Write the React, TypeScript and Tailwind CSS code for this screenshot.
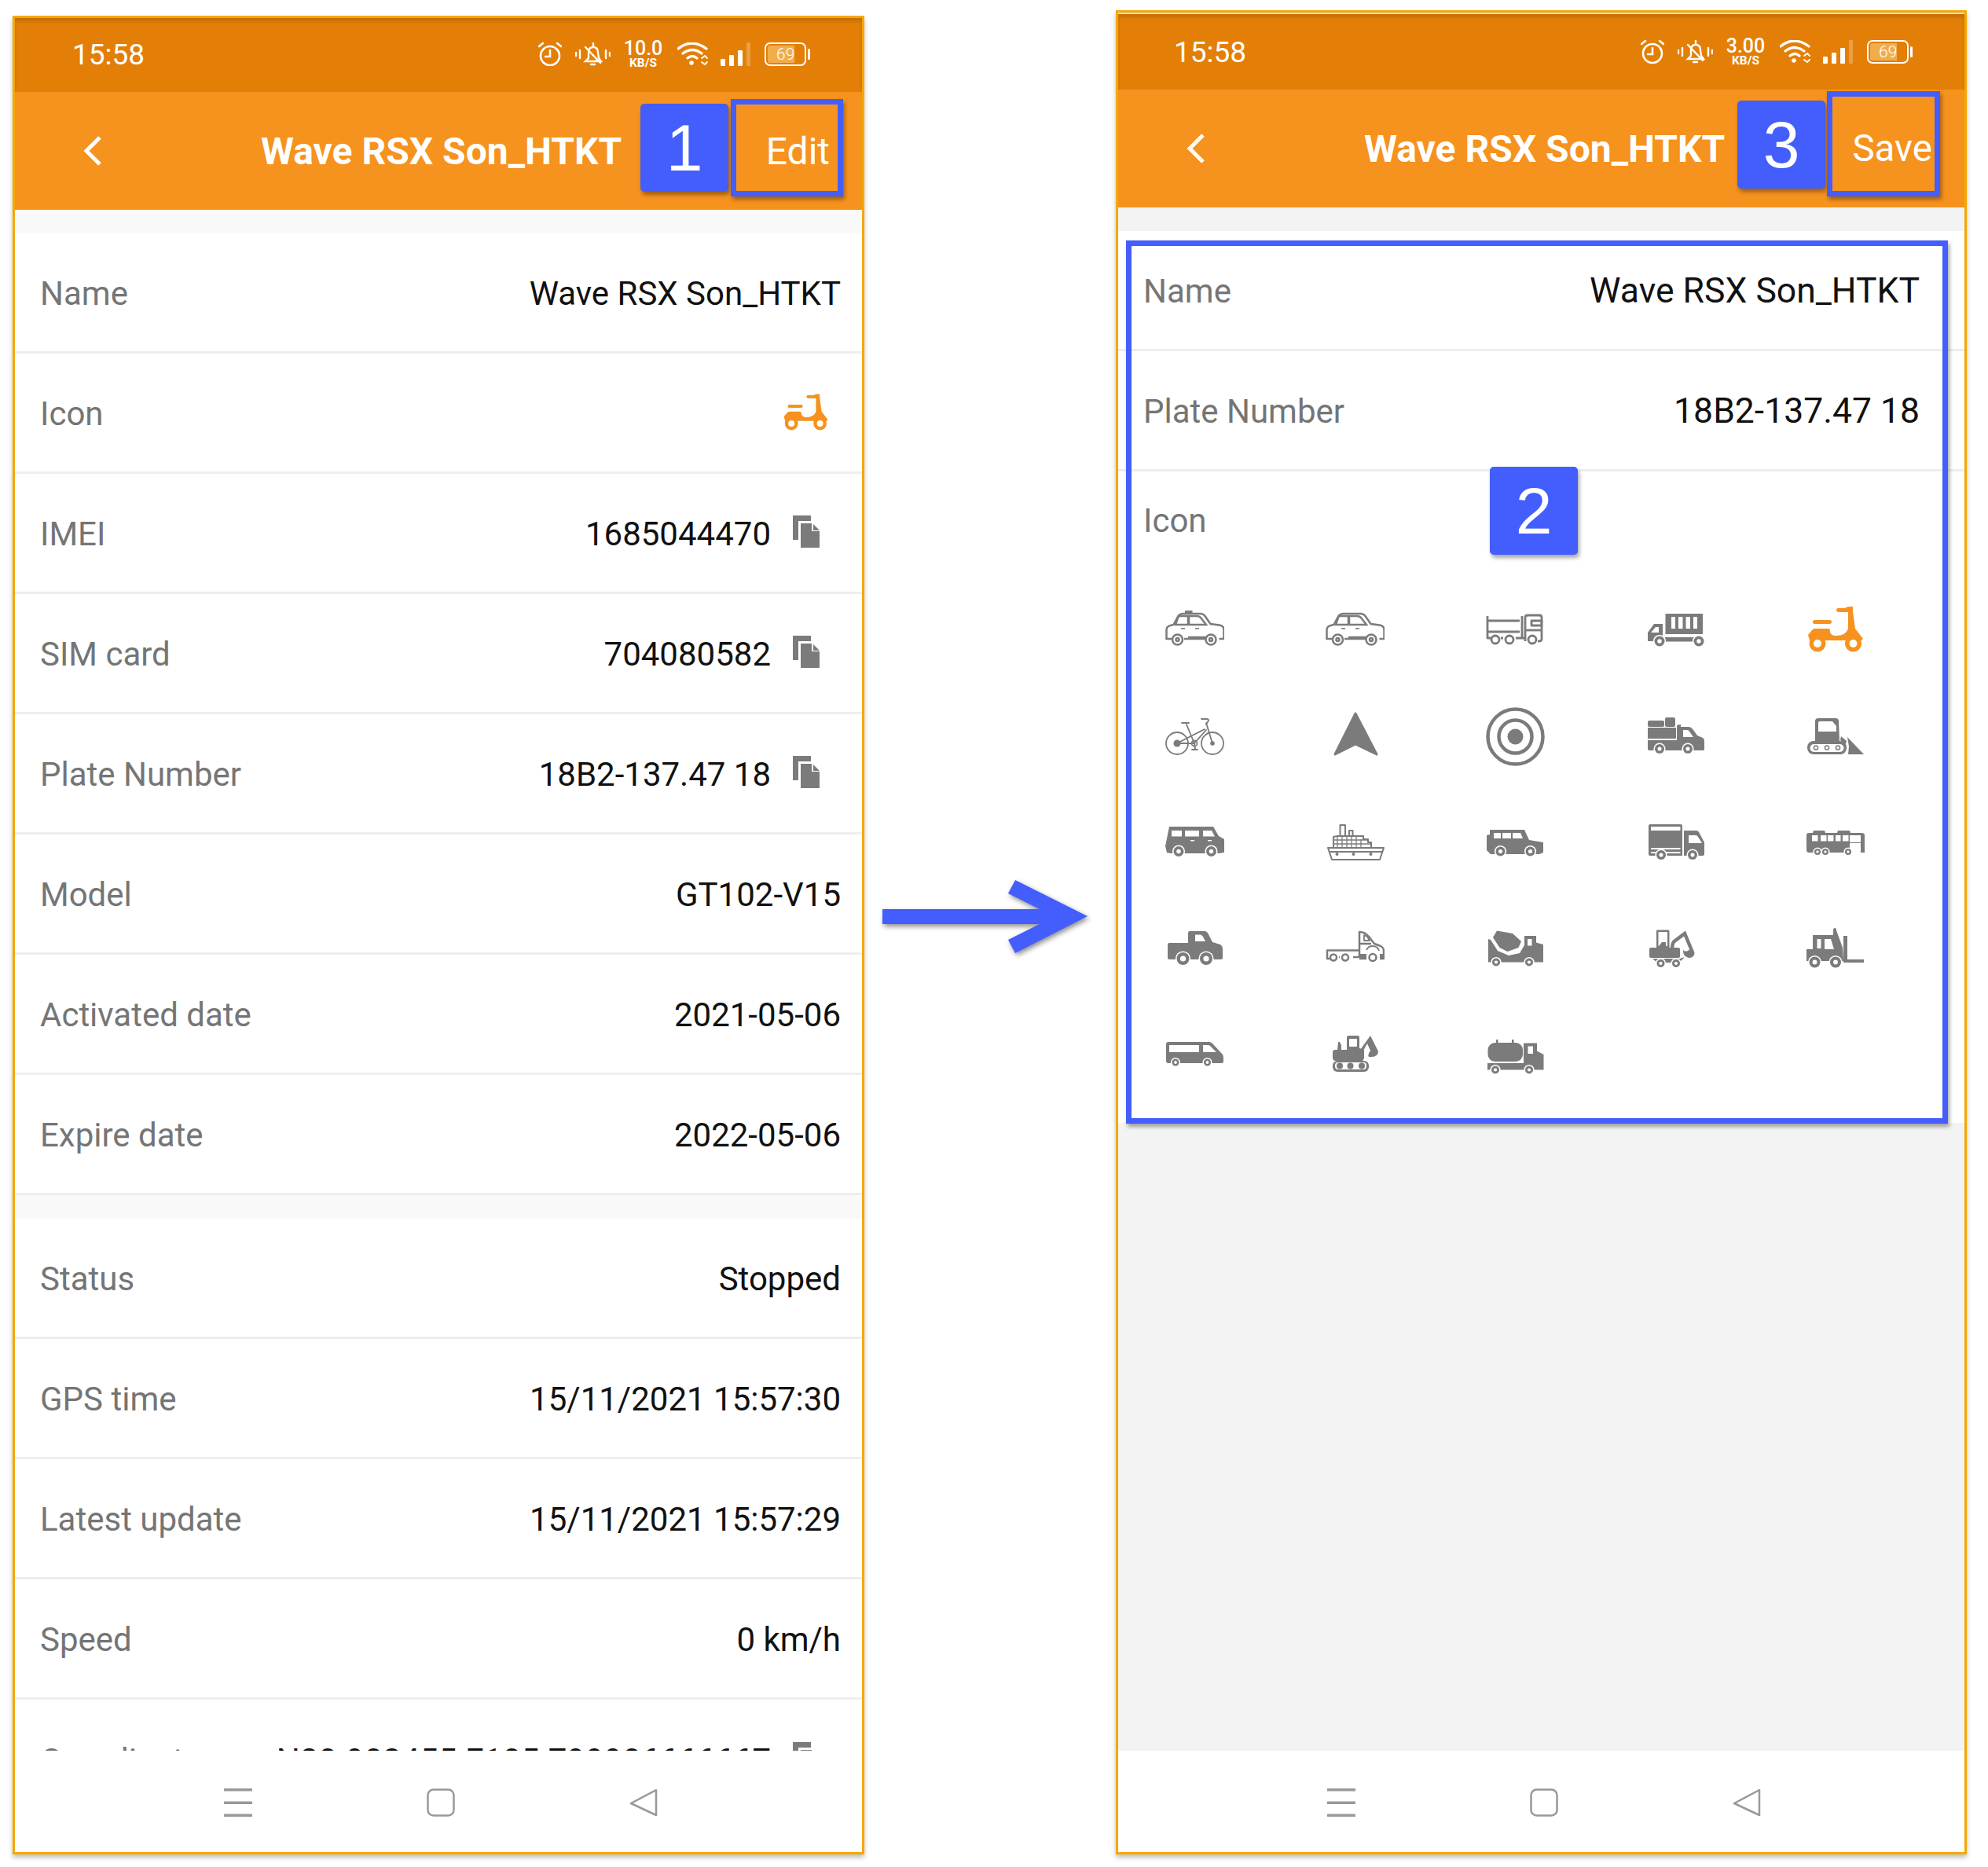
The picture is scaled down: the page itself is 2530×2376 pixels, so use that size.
import type { ReactNode } from 'react'

const G = '#7b7b7b'

function Wheel({ x, y, r, hole = 0.42 }: { x: number; y: number; r: number; hole?: number }) {
  return (
    <g>
      <circle cx={x} cy={y} r={r + 1.6} fill="#fff" />
      <circle cx={x} cy={y} r={r} fill={G} />
      <circle cx={x} cy={y} r={r * hole} fill="#fff" />
    </g>
  )
}

function IconBox({ children, color = G, size = 75 }: { children: ReactNode; color?: string; size?: number }) {
  return (
    <svg width={size} height={size} viewBox="0 0 75 75" fill={color} aria-hidden="true">
      {children}
    </svg>
  )
}

function CarIcon({ taxi = false }: { taxi?: boolean }) {
  return (
    <IconBox>
      {taxi && <rect x="25" y="13" width="9.5" height="4.5" />}
      <g fill="none" stroke={G} strokeWidth="2.5">
        <path d="M8 49H1.5V38q0-5 5-6l4-1 6-11q2-3 6-3h22q4 0 6 3l7 10 11 1.5q6 1 6 6V49h-6M24 49h27" />
        <path d="M13 31l3-9q1-2 3-2h10v11zM30 20h10q3 0 5 2l7 9H30z" />
        <path d="M29 47h23" />
        <circle cx="15.5" cy="50" r="6.5" />
        <circle cx="15.5" cy="50" r="2" />
        <circle cx="58" cy="50" r="6.5" />
        <circle cx="58" cy="50" r="2" />
      </g>
      <rect x="20" y="35" width="5" height="1.6" />
      <rect x="38" y="35" width="5" height="1.6" />
    </IconBox>
  )
}

function DumpTruckIcon() {
  return (
    <IconBox>
      <g fill="none" stroke={G} strokeWidth="2.8" strokeLinejoin="round">
        <path d="M2 20v28h9M19 48h3M38 48h12M2 26h41M2 40h41M46 20v28" />
        <path d="M50 52V22q0-3 3-3h15q3 0 3 3v27q0 3-3 3h-2" />
        <rect x="58" y="26" width="13" height="6" />
        <path d="M50 38h21" />
      </g>
      <circle cx="12" cy="50" r="5" fill="#fff" stroke={G} strokeWidth="2.8" />
      <circle cx="30" cy="50" r="5" fill="#fff" stroke={G} strokeWidth="2.8" />
      <circle cx="59" cy="50" r="5" fill="#fff" stroke={G} strokeWidth="2.8" />
    </IconBox>
  )
}

function ContainerTruckIcon() {
  return (
    <IconBox>
      <path fillRule="evenodd" d="M24.500 17H72V43H24.500zM32 21v15h5V21zM41 21v15h5.500V21zM50.500 21v15H56V21zM60 21v15h5V21z" />
      <path fillRule="evenodd" d="M2 52V41l8-11h11v22zM6 41h10v-7h-4z" />
      <rect x="24" y="47" width="38" height="5.500" />
      <Wheel x={17} y={52} r={6.500} />
      <Wheel x={67} y={52} r={6.500} />
    </IconBox>
  )
}

function ScooterIcon({ size = 75 }: { size?: number }) {
  return (
    <IconBox color="#f6921e" size={size}>
      <rect x="8" y="25" width="24" height="5" rx="2.500" />
      <path d="M38 12q0-2 2-2h9q2-2 6-2h4v7H41q-3 0-3-3z" />
      <path d="M53 14h6l3 22 10 13-2 2H4l-2-7 5-6q1-2 4-2h16q3 0 3 3 0 6 8 6 12 0 15-9z" />
      <circle cx="14" cy="55" r="10.500" />
      <circle cx="59.500" cy="55" r="10.500" />
      <circle cx="14" cy="55" r="5" fill="#fff" />
      <circle cx="59.500" cy="55" r="5" fill="#fff" />
    </IconBox>
  )
}

function BikeIcon() {
  return (
    <IconBox>
      <g fill="none" stroke={G} strokeWidth="1.8" strokeLinecap="round">
        <circle cx="15" cy="46" r="14" />
        <circle cx="60" cy="46" r="14" />
        <path d="M15 46h22L27 22M15 46l35-18M37 46l15-17M52 20l8 26M46 15h7q2 0 2 2l-3 5" />
        <path d="M21 20h9M37 46l1 7M34 54h7" />
        <circle cx="37" cy="46" r="3.500" />
      </g>
      <circle cx="15" cy="46" r="4.500" />
      <circle cx="60" cy="46" r="2.800" />
    </IconBox>
  )
}

function NavArrowIcon() {
  return (
    <IconBox>
      <path d="M38 8L12 60l26-13 27 13z" stroke={G} strokeWidth="3" strokeLinejoin="round" />
    </IconBox>
  )
}

function TargetIcon() {
  return (
    <IconBox>
      <circle cx="37.500" cy="37.500" r="35" fill="none" stroke={G} strokeWidth="4.500" />
      <circle cx="37.500" cy="37.500" r="21" fill="none" stroke={G} strokeWidth="4.500" />
      <circle cx="37.500" cy="37.500" r="10" />
    </IconBox>
  )
}

function LoadedTruckIcon() {
  return (
    <IconBox>
      <rect x="2" y="17" width="21" height="8" rx="2" />
      <rect x="24" y="13" width="13" height="12" rx="2" />
      <rect x="2" y="26" width="36" height="14" />
      <path fillRule="evenodd" d="M2 42h37V24q0-2 5-2v3h10q3 0 6 4l5 7 7 3q2 1 2 5v10q0 1-2 1H4q-2 0-2-2zM47 29v9h13l-5-7q-1-2-3-2z" />
      <Wheel x={17} y={53} r={6} />
      <Wheel x={53} y={53} r={6} />
    </IconBox>
  )
}

function DozerIcon() {
  return (
    <IconBox>
      <path fillRule="evenodd" d="M15 14h22q4 0 4 4l1 25H11V18q0-4 4-4zM17 18q-2 0-2 2v11h23v-7l-5-6z" />
      <rect x="1" y="43" width="50" height="17" rx="8" />
      <rect x="4.500" y="47" width="43" height="10" rx="5" fill="#fff" />
      <circle cx="12" cy="51.500" r="2.600" fill="none" stroke={G} strokeWidth="1.500" />
      <circle cx="26" cy="51.500" r="2.600" fill="none" stroke={G} strokeWidth="1.500" />
      <circle cx="40" cy="51.500" r="2.600" fill="none" stroke={G} strokeWidth="1.500" />
      <path d="M52 38l21 22H53l1-10zM44 37l7 6-1 4-7-5z" />
    </IconBox>
  )
}

function VanIcon() {
  return (
    <IconBox>
      <path fillRule="evenodd" d="M5 17h56l7 12 7 4v17l-7 1H7l-5-1-2-8zM8 22v7.500h13V22zM25 22v7.500h18V22zM48 22v7.500h15l-4-7.500z" />
      <rect x="32" y="34" width="5" height="1.500" fill="#fff" />
      <rect x="54" y="34" width="5" height="1.500" fill="#fff" />
      <Wheel x={17} y={48.500} r={6.500} />
      <Wheel x={58.500} y={48.500} r={6.500} />
    </IconBox>
  )
}

function ShipIcon() {
  return (
    <IconBox>
      <g fill="none" stroke={G} strokeWidth="2" strokeLinejoin="round">
        <path d="M3 44h71l-5 15H8z" />
        <path d="M4 49h68" />
        <path d="M10 44V30l5-1h33v4h6v4h4v7" />
        <path d="M18.500 29V15h6.500v14M30 29v-7h4.500v7" />
        <path d="M15 29v15M21 29v15M27 29v15M33 29v15M39 29v15M45 33v11M10 34h44M10 39h48" strokeWidth="1.300" />
      </g>
      <circle cx="14.500" cy="52" r="2" />
      <circle cx="35.500" cy="52" r="2" />
      <circle cx="57.500" cy="52" r="2" />
    </IconBox>
  )
}

function JeepIcon() {
  return (
    <IconBox>
      <path fillRule="evenodd" d="M5 21h44l6 13 18 3v13l-5 2H6l-5-5V28l4-1zM10 25v7h9v-7zM21 25v7h11v-7zM34 25v7h13l-3-7z" />
      <Wheel x={18.500} y={48.500} r={6} />
      <Wheel x={56.500} y={48.500} r={6} />
    </IconBox>
  )
}

function BoxTruckIcon() {
  return (
    <IconBox>
      <path fillRule="evenodd" d="M5 14h39q2 0 2 2v38H5q-2 0-2-2V16q0-2 2-2zM6 17v5h37.500v-5zM6 44v2h37.500v-2zM6 49v2h37.500v-2z" />
      <path fillRule="evenodd" d="M48 22h16q2 0 3 2l7 13v15q0 2-2 2H48zM54 28v10h17l-5-8q-1-2-3-2z" />
      <Wheel x={19} y={53} r={6} />
      <Wheel x={59} y={53} r={6} />
    </IconBox>
  )
}

function BusIcon() {
  return (
    <IconBox>
      <path d="M9 22h14l1 3h15l1-3h15l1 3h14q4 0 4 3h0v22H2q-2-1-2-3V28q0-3 3-3h5z" />
      <path d="M70 27h2q2 0 2 3v4h-1.500v-3q0-1-1-1H70z" />
      <g fill="#fff">
        <rect x="7" y="28" width="7.500" height="7.500" />
        <rect x="18" y="28" width="7.500" height="7.500" />
        <rect x="27" y="28" width="7.500" height="7.500" />
        <rect x="37" y="28" width="6.500" height="7.500" />
        <rect x="46" y="28" width="7.500" height="7.500" />
        <rect x="55" y="28" width="14" height="22" />
      </g>
      <path d="M55 37h14v1H55z" />
      <path d="M69 28h2v21h-2z" />
      <Wheel x={14} y={49} r={4} />
      <Wheel x={24} y={49} r={4} />
      <Wheel x={53} y={49} r={4} />
    </IconBox>
  )
}

function PickupIcon() {
  return (
    <IconBox>
      <path fillRule="evenodd" d="M5 29h24V16q0-2 2-2h19q3 0 5 4l5 10 10 3q3 2 3 6v11q0 2-2 2H5q-2 0-2-2V31q0-2 2-2zM38 18.500V27h13l-3-6q-1-2-3-2.500z" />
      <Wheel x={22.500} y={49} r={8} hole={0.45} />
      <Wheel x={52} y={49} r={8} hole={0.45} />
    </IconBox>
  )
}

function TowTruckIcon() {
  return (
    <IconBox>
      <g fill="none" stroke={G} strokeWidth="2.500" strokeLinejoin="round">
        <path d="M5 49H2V38.500h41V47h-8M18 47h-1M43 49h9" />
        <path d="M43 38V15q7 0 12 6l7 9 8 3q4 2 4 6v10h-5M43 30h15" />
        <path d="M49 26h7l-3-5-4-2zM52 38q2-5 8-5 6 0 8 6" strokeWidth="1.800" />
      </g>
      <circle cx="10" cy="47.500" r="4" fill="#fff" stroke={G} strokeWidth="2.500" />
      <circle cx="25" cy="47.500" r="4" fill="#fff" stroke={G} strokeWidth="2.500" />
      <circle cx="60" cy="47.500" r="4.500" fill="#fff" stroke={G} strokeWidth="2.500" />
      <path d="M43 43h9v6h-9zM69 43h5v6h-5z" />
    </IconBox>
  )
}

function MixerIcon() {
  return (
    <IconBox>
      <path d="M14 13.500l20 3.500 11 10-3.500 8-14 5-10-5-8.500-13z" />
      <path fillRule="evenodd" d="M3 24l3 1 9 14 14 6 14-3 6-10V20h15v8.500l9 2.500v22.500H3zM53 24v8.500h5.500V24z" />
      <Wheel x={13} y={53.500} r={5} />
      <Wheel x={55} y={53.500} r={5} />
    </IconBox>
  )
}

function ExcavatorIcon() {
  return (
    <IconBox>
      <path fillRule="evenodd" d="M14 12.500h14q1.500 0 1.500 2V35H13V14q0-1.500 1-1.500zM15.500 15v18h11.500V15z" />
      <path d="M16 33l4-5h5v5z" />
      <rect x="4" y="35" width="39" height="13" rx="2" />
      <path d="M8 49h35l6-2-7 7H14z" />
      <path d="M33 37q0-9 4-11l12-9 10 24" fill="none" stroke={G} strokeWidth="4.500" />
      <path d="M47 38q3 3 6 1 2-1 3-3l5.500 5q0 7-7 7-8-2-7.500-10z" />
      <Wheel x={18.500} y={55} r={5} />
      <Wheel x={38} y={55} r={5} />
    </IconBox>
  )
}

function ForkliftIcon() {
  return (
    <IconBox>
      <path fillRule="evenodd" d="M8 19h26v-6q0-3 2-3t2 3l8 22 1 17H0V37h8zM13.500 24v12h5V24zM23 24v13h12l-4-13z" />
      <path d="M47 20h5v30h21v4H47z" />
      <Wheel x={10.500} y={53.500} r={7} />
      <Wheel x={37} y={53.500} r={7} />
    </IconBox>
  )
}

function MinivanIcon() {
  return (
    <IconBox>
      <path fillRule="evenodd" d="M4 20h52q2 0 4 2l13 14q1 2 1 6v3q0 2-4 2H4q-3 0-3-3V23q0-3 3-3zM5 24v9h38v-9zM48 24v9h17l-8-8q-1-1-3-1z" />
      <Wheel x={13} y={46} r={4.500} />
      <Wheel x={53.500} y={46} r={4.500} />
    </IconBox>
  )
}

function MiniExcavatorIcon() {
  return (
    <IconBox>
      <rect x="9" y="44" width="46" height="14" rx="6" />
      <rect x="12" y="46" width="40" height="9" rx="4" fill="#fff" />
      <circle cx="18" cy="50.500" r="4" />
      <circle cx="31.500" cy="50.500" r="4" />
      <circle cx="46" cy="50.500" r="4" />
      <path d="M9 32q1-2 3-2h3l1-10h2l2 4v6h7V14q0-2 2-2h12q2 0 2 2v14l6 2v11l-2 3H12q-3-1-3-4z" />
      <rect x="30" y="16" width="10" height="10" rx="1" fill="#fff" />
      <path d="M44 30l13-18 10 20q0 8-12 7-2-2 2-8l-4-9-5 9z" />
    </IconBox>
  )
}

function TankerIcon() {
  return (
    <IconBox>
      <rect x="2.500" y="21" width="44.500" height="24" rx="9" />
      <rect x="13" y="17" width="2.500" height="5" />
      <rect x="33" y="17" width="2.500" height="5" />
      <path fillRule="evenodd" d="M48 21.500h17v10l8.500 4.500v19.500H2V47h46zM53.500 25.500V35H60v-9.500z" />
      <Wheel x={12} y={55.500} r={5} />
      <Wheel x={55} y={55.500} r={5} />
    </IconBox>
  )
}

function CopyIcon() {
  return (
    <svg width="34" height="41" viewBox="0 0 34 41" fill={G} aria-hidden="true">
      <path d="M0 0h23v7H7v24H0z" />
      <path d="M10 10h14v10h10v21H10z" />
      <path d="M26 11l8 8h-8z" />
    </svg>
  )
}

function StatusIcons({ speed }: { speed: string }) {
  return (
    <div className="flex items-center text-white">
      <svg width="30" height="30" viewBox="0 0 30 30" fill="none" stroke="#fff" strokeWidth="2.600" className="mr-[17px]">
        <circle cx="15" cy="17" r="12" />
        <path d="M15 10v8h-6M1 5l5-4M29 5l-5-4" strokeLinecap="round" />
      </svg>
      <svg width="45" height="30" viewBox="0 0 45 30" fill="none" stroke="#fff" strokeWidth="2.400" strokeLinecap="round" className="mr-[18px]">
        <path d="M1 13v4M6 10v10M39 10v10M44 13v4" />
        <path d="M13 24l4-4v-7q0-7 6-7t6 7l1 7 3 4zM20 28h5M23 1v4M13 6l19 20" />
      </svg>
      <div className="mr-[20px] flex w-[47px] flex-col items-center font-['Roboto',sans-serif] text-white">
        <span className="text-[25px] leading-[22px] font-medium">{speed}</span>
        <span className="mt-[1px] text-[15.5px] leading-[13px] font-bold">KB/S</span>
      </div>
      <svg width="40" height="30" viewBox="0 0 40 30" fill="none" stroke="#fff" strokeWidth="3.200" strokeLinecap="round" className="mr-[15px]">
        <path d="M1 8q17-14 36 0M7 14q12-9 24 0M13 20q6-5 12 0" />
        <circle cx="18" cy="26" r="2.800" fill="#fff" stroke="none" />
        <path d="M31 20l4-3 3 3M31 25l4 3 3-3" strokeWidth="1.800" />
      </svg>
      <svg width="39" height="30" viewBox="0 0 39 30" fill="#fff" className="mr-[17px]">
        <rect x="0" y="21" width="6" height="9" rx="1" />
        <rect x="11" y="16" width="6" height="14" rx="1" />
        <rect x="22" y="10" width="6" height="20" rx="1" />
        <rect x="33" y="0" width="5" height="30" rx="1" fill="#ffffff" fillOpacity="0.25" />
      </svg>
      <div className="relative flex h-[30px] w-[59px] items-center">
        <div className="flex h-full w-[53px] overflow-hidden rounded-[7px] border-[2.500px] border-white p-[2px]">
          <div className="h-full w-[34px] rounded-l-[3px] bg-[#f2ad4b]" />
        </div>
        <div className="ml-[2px] h-[14px] w-[3px] rounded-[2px] bg-white" />
        <span className="absolute left-[15px] top-[2px] font-['Roboto',sans-serif] text-[21px] leading-[26px] font-light text-white">69</span>
      </div>
    </div>
  )
}

function PhoneChrome({ speed, action, actionClass, statusClass, children }: { speed: string; action: string; actionClass: string; statusClass: string; children: ReactNode }) {
  return (
    <>
      <div className={`flex flex-none items-center justify-between bg-[#e37f07] pr-[65px] shadow-[inset_0_4px_4px_rgba(0,0,0,0.14)] ${statusClass}`}>
        <span className="text-[37px] leading-none text-white">15:58</span>
        <StatusIcons speed={speed} />
      </div>
      <div className="flex h-[150px] flex-none items-center bg-[#f6921e] pr-[41px] pl-[87px]">
        <svg width="24" height="38" viewBox="0 0 24 38" fill="none" stroke="#fff" strokeWidth="5">
          <path d="M21 2L4 19l17 17" />
        </svg>
        <span className="mt-[2px] ml-[202px] text-[48px] leading-none font-bold text-white">Wave RSX Son_HTKT</span>
        <span className={`mt-[2px] ml-auto leading-none text-white ${actionClass}`}>{action}</span>
      </div>
      {children}
      <div className="flex h-[129px] flex-none items-center justify-center gap-[222px] bg-white pt-[3px] pl-[6px]">
        <svg width="36" height="36" viewBox="0 0 36 36" fill="#999">
          <rect y="0" width="36" height="3.500" />
          <rect y="16.500" width="36" height="3.500" />
          <rect y="32.500" width="36" height="3.500" />
        </svg>
        <svg width="36" height="36" viewBox="0 0 36 36" fill="none" stroke="#999" strokeWidth="2.500">
          <rect x="1.500" y="1.500" width="33" height="33" rx="7" />
        </svg>
        <svg width="36" height="36" viewBox="0 0 36 36" fill="none" stroke="#999" strokeWidth="2.500" strokeLinejoin="round">
          <path d="M34 2v32L2 19z" />
        </svg>
      </div>
    </>
  )
}

function Row({ label, value, copy, icon, clip }: { label: string; value?: string; copy?: boolean; icon?: boolean; clip?: boolean }) {
  return (
    <div className={`flex h-[153px] flex-none items-center justify-between bg-white pt-[2px] pl-[32px] text-[42px] ${clip ? '' : 'border-b-[3px] border-[#eeeeee]'} ${copy || icon ? 'pr-[54px]' : 'pr-[27px]'}`}>
      <span className="text-[#757575]">{label}</span>
      {icon ? (
        <div className="-mr-[13px] -mt-[2px]">
          <ScooterIcon size={60} />
        </div>
      ) : (
        <div className="flex items-center">
          <span className="text-[#111111]">{value}</span>
          {copy && (
            <div className="ml-[28px] -mt-[6px]">
              <CopyIcon />
            </div>
          )}
        </div>
      )}
    </div>
  )
}

function Badge({ n, className }: { n: string; className: string }) {
  return (
    <div className={`absolute flex h-[112px] w-[112px] items-center justify-center rounded-[5px] bg-[#435efc] font-['Liberation_Sans',sans-serif] text-[84px] leading-none text-white shadow-[2px_4px_5px_rgba(0,0,0,0.35)] ${className}`}>
      {n}
    </div>
  )
}

const vehicleIcons = [
  <CarIcon taxi />, <CarIcon />, <DumpTruckIcon />, <ContainerTruckIcon />, <ScooterIcon />,
  <BikeIcon />, <NavArrowIcon />, <TargetIcon />, <LoadedTruckIcon />, <DozerIcon />,
  <VanIcon />, <ShipIcon />, <JeepIcon />, <BoxTruckIcon />, <BusIcon />,
  <PickupIcon />, <TowTruckIcon />, <MixerIcon />, <ExcavatorIcon />, <ForkliftIcon />,
  <MinivanIcon />, <MiniExcavatorIcon />, <TankerIcon />,
]

export default function App() {
  return (
    <div className="flex h-[2376px] w-[2530px] items-start overflow-hidden bg-white pl-[16px] font-['Roboto',sans-serif]">
      {/* before */}
      <div className="relative mt-[20px] flex h-[2340px] w-[1084px] flex-none flex-col border-[3px] border-[#f5a800] bg-white shadow-[0_4px_6px_rgba(0,0,0,0.25)]">
        <PhoneChrome speed="10.0" action="Edit" actionClass="text-[48px]" statusClass="h-[94px] pb-[2px] pl-[73px]">
          <div className="min-h-0 flex-1 overflow-hidden bg-[#f9f9f9] pt-[30px]">
            <Row label="Name" value="Wave RSX Son_HTKT" />
            <Row label="Icon" icon />
            <Row label="IMEI" value="1685044470" copy />
            <Row label="SIM card" value="704080582" copy />
            <Row label="Plate Number" value="18B2-137.47 18" copy />
            <Row label="Model" value="GT102-V15" />
            <Row label="Activated date" value="2021-05-06" />
            <Row label="Expire date" value="2022-05-06" />
            <div className="h-[30px]" />
            <Row label="Status" value="Stopped" />
            <Row label="GPS time" value="15/11/2021 15:57:30" />
            <Row label="Latest update" value="15/11/2021 15:57:29" />
            <Row label="Speed" value="0 km/h" />
            <Row label="Coordinate" value="N20.903455 E105.799906666667" copy clip />
          </div>
        </PhoneChrome>
        <Badge n="1" className="left-[796px] top-[109px]" />
        <div className="absolute left-[911px] top-[103px] h-[124px] w-[143px] border-[7px] border-[#435efc] shadow-[2px_4px_5px_rgba(0,0,0,0.35)]" />
      </div>

      <svg width="261" height="93" viewBox="0 0 261 93" fill="#435efc" className="mt-[1120px] mr-[36px] ml-[23px] flex-none drop-shadow-[2px_3px_3px_rgba(0,0,0,0.45)]">
        <path d="M0 37h200l-40-20 9-17 92 46-92 47-9-17 40-20H0z" />
      </svg>

      {/* after */}
      <div className="relative mt-[13px] flex h-[2347px] w-[1083px] flex-none flex-col border-[3px] border-[#f5a800] bg-[#dddddd] pt-[2px] shadow-[0_4px_6px_rgba(0,0,0,0.25)]">
        <PhoneChrome speed="3.00" action="Save" actionClass="text-[47.500px]" statusClass="h-[96px] pl-[71px]">
          <div className="min-h-0 flex-1 overflow-hidden bg-[#f3f3f3] pt-[30px]">
            <div className="bg-white pb-[48px]">
              <div className="flex h-[153px] items-center justify-between border-b-[3px] border-[#eeeeee] pt-[2px] pr-[57px] pl-[32px]">
                <span className="text-[42px] text-[#757575]">Name</span>
                <span className="text-[44.500px] text-[#111111]">Wave RSX Son_HTKT</span>
              </div>
              <div className="flex h-[153px] items-center justify-between border-b-[3px] border-[#eeeeee] pt-[2px] pr-[57px] pl-[32px]">
                <span className="text-[42px] text-[#757575]">Plate Number</span>
                <span className="text-[44.500px] text-[#111111]">18B2-137.47 18</span>
              </div>
              <div className="pt-[33px] pl-[32px] text-[42px] leading-[60px] text-[#757575]">Icon</div>
              <div className="mt-[71px] grid grid-cols-[repeat(5,75px)] gap-x-[129px] gap-y-[60.500px] pl-[60px]">
                {vehicleIcons.map((icon, i) => (
                  <div key={i} className="h-[75px] w-[75px]">{icon}</div>
                ))}
              </div>
            </div>
          </div>
        </PhoneChrome>
        <div className="absolute left-[10px] top-[290px] h-[1124px] w-[1046px] border-[7px] border-[#435efc] shadow-[2px_4px_5px_rgba(0,0,0,0.35)]" />
        <Badge n="2" className="left-[473px] top-[578px]" />
        <Badge n="3" className="left-[788px] top-[112px]" />
        <div className="absolute left-[902px] top-[100px] h-[134px] w-[144px] border-[7px] border-[#435efc] shadow-[2px_4px_5px_rgba(0,0,0,0.35)]" />
      </div>
    </div>
  )
}
